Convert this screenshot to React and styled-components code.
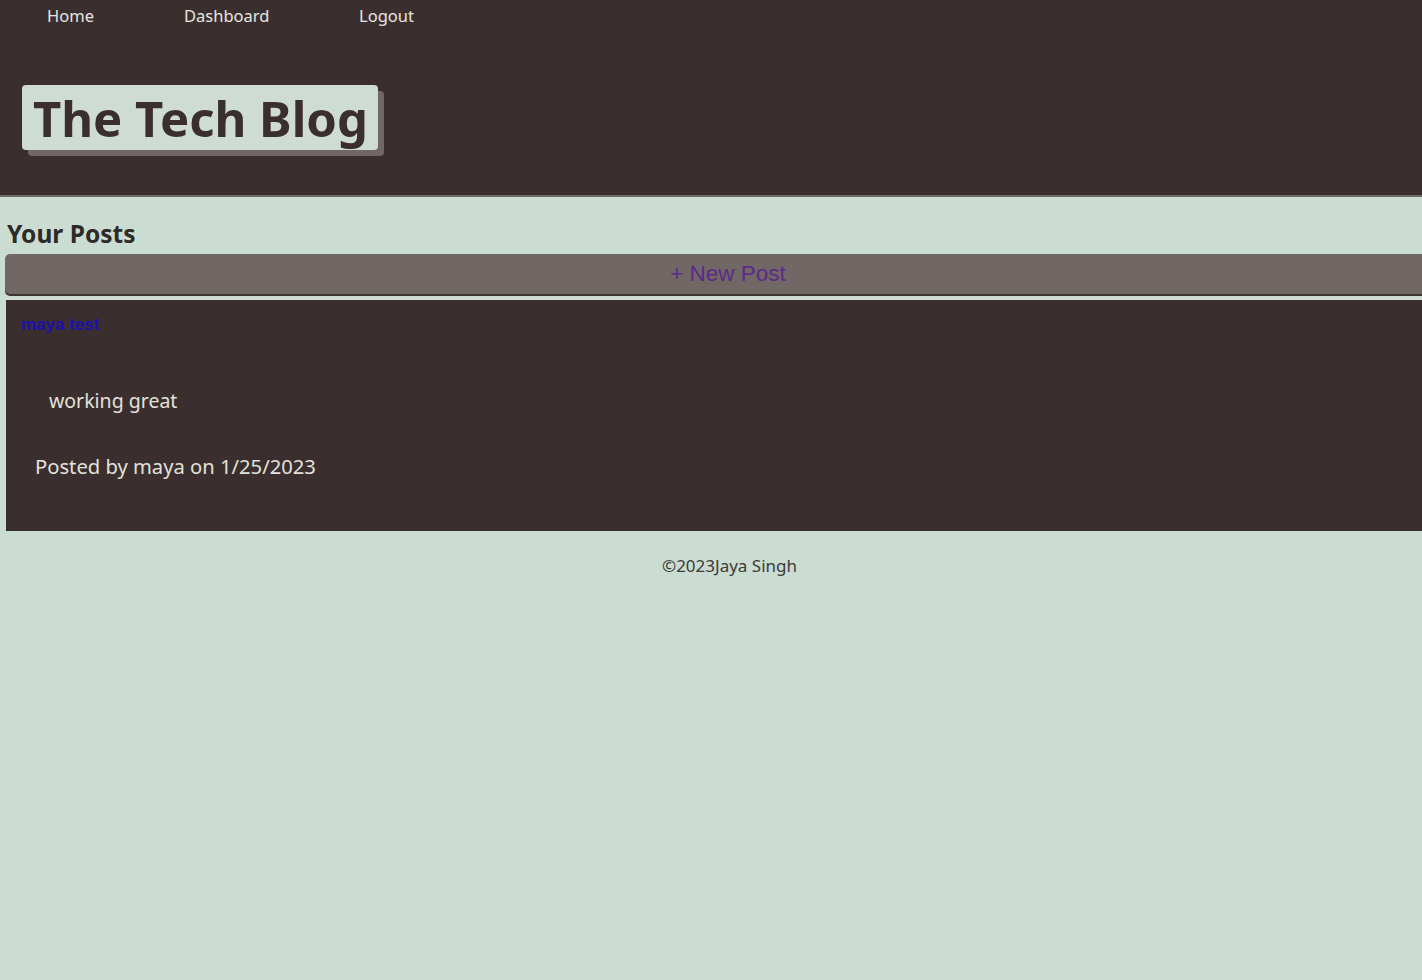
import React from "react";
import styled, { createGlobalStyle } from "styled-components";

const GlobalStyle = createGlobalStyle`
  html, body {
    margin: 0;
    padding: 0;
    background-color: #cbdcd2;
    overflow-x: hidden;
    font-family: "Noto Sans", "Open Sans", sans-serif;
  }
`;

const Page = styled.div`
  width: 1451px;
  min-height: 980px;
  background-color: #cbdcd2;
`;

const Header = styled.header`
  background-color: #3a2f2e;
  height: 197px;
  border-bottom: 2px solid #6d6a66;
  box-sizing: border-box;
  display: flex;
  flex-direction: column;
`;

const Nav = styled.nav`
  display: flex;
  padding: 4px 0 0 47px;
`;

const NavLink = styled.a`
  color: #e6e6e0;
  font-size: 16.5px;
  text-decoration: none;
  width: ${(p) => p.$w}px;
  line-height: 24px;
`;

const TitleBox = styled.h1`
  align-self: flex-start;
  margin: 57px 0 0 22px;
  padding: 0 10px 0 11px;
  height: 65px;
  display: flex;
  align-items: center;
  background-color: #cfdcd4;
  color: #3a2f2e;
  border-radius: 4px;
  box-shadow: 6px 6px 0 #716764;
  font-size: 49px;
  font-weight: 700;
`;

const Main = styled.main`
  padding: 0 0 0 5px;
`;

const SectionTitle = styled.h2`
  margin: 0;
  padding: 20px 0 0 2px;
  font-size: 24.5px;
  font-weight: 700;
  color: #2e2a28;
  line-height: 34px;
`;

const NewPostButton = styled.button`
  display: block;
  width: 100%;
  height: 40px;
  margin-top: 3px;
  border: none;
  border-radius: 5px;
  background-color: #716764;
  box-shadow: 0 2px 0 #3c3633;
  color: #5b2a8c;
  font-family: "Liberation Sans", Arial, sans-serif;
  font-size: 22.5px;
  cursor: pointer;
`;

const PostCard = styled.article`
  margin-top: 4px;
  margin-left: 1px;
  height: 233px;
  background-color: #3a2f2e;
  border-top: 2px solid #d6ddd8;
  box-sizing: border-box;
  padding: 15px 0 0 15px;
`;

const PostTitle = styled.a`
  display: block;
  color: #1a0fb0;
  font-family: "Liberation Sans", Arial, sans-serif;
  font-weight: 700;
  font-size: 17px;
  line-height: 20px;
  text-decoration: none;
`;

const PostBody = styled.p`
  margin: 53px 0 0 28px;
  color: #e2e2dc;
  font-size: 19.5px;
  line-height: 26px;
`;

const PostMeta = styled.p`
  margin: 39px 0 0 14px;
  color: #e2e2dc;
  font-size: 20.2px;
  line-height: 26px;
`;

const Footer = styled.footer`
  text-align: center;
  padding: 23px 0 0 8px;
  color: #3b3b38;
  font-size: 17px;
`;

export default function App() {
  return (
    <Page>
      <GlobalStyle />
      <Header>
        <Nav>
          <NavLink $w={137} href="#">Home</NavLink>
          <NavLink $w={175} href="#">Dashboard</NavLink>
          <NavLink $w={80} href="#">Logout</NavLink>
        </Nav>
        <TitleBox>The Tech Blog</TitleBox>
      </Header>
      <Main>
        <SectionTitle>Your Posts</SectionTitle>
        <NewPostButton>+ New Post</NewPostButton>
        <PostCard>
          <PostTitle href="#">maya test</PostTitle>
          <PostBody>working great</PostBody>
          <PostMeta>Posted by maya on 1/25/2023</PostMeta>
        </PostCard>
      </Main>
      <Footer>©2023Jaya Singh</Footer>
    </Page>
  );
}
